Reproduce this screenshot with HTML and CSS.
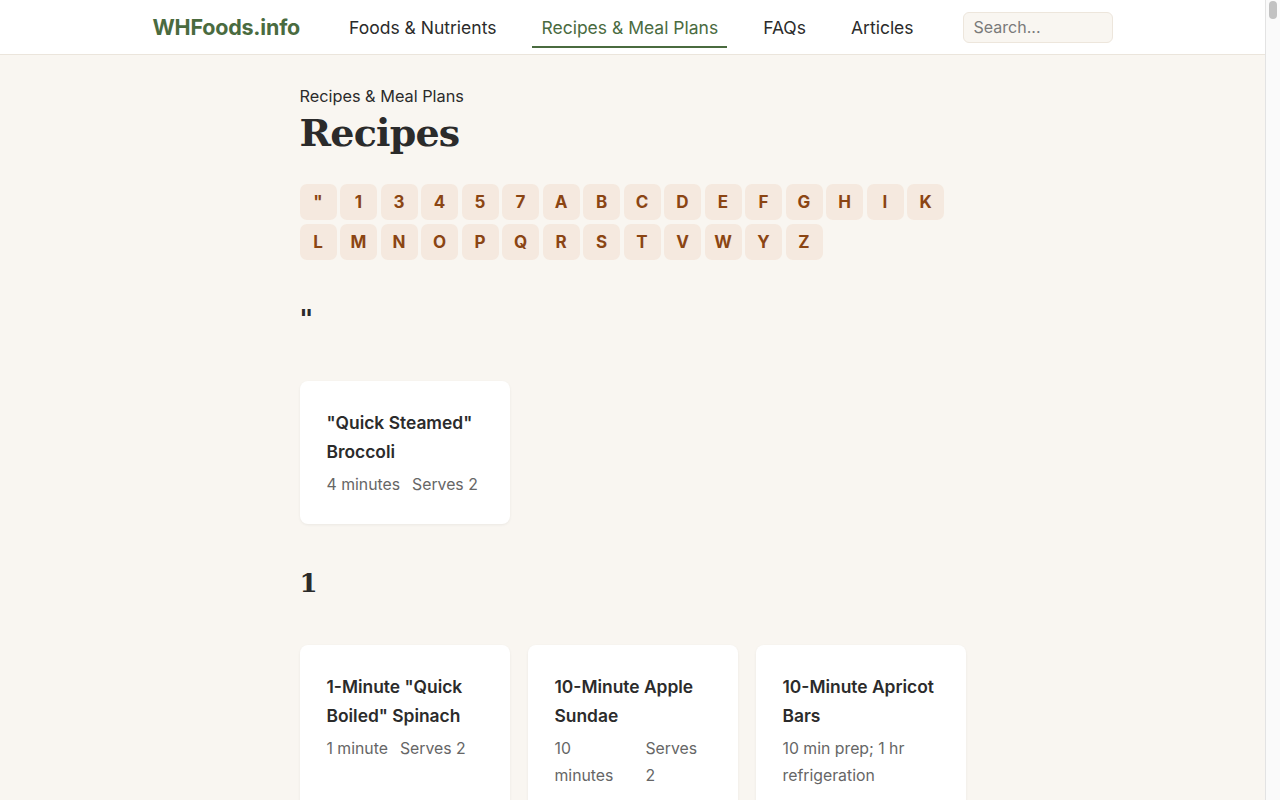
FILE: index.html
```html
<!DOCTYPE html>
<html lang="en">
<head>
<meta charset="utf-8">
<title>Recipes - WHFoods.info</title>
<link rel="stylesheet" href="styles.css">
</head>
<body>
<div class="page">
<header class="site-header">
  <div class="header-inner">
    <a class="logo" href="#">WHFoods.info</a>
    <nav class="main-nav">
      <a href="#">Foods &amp; Nutrients</a>
      <a href="#" class="active">Recipes &amp; Meal Plans</a>
      <a href="#">FAQs</a>
      <a href="#">Articles</a>
    </nav>
    <input class="search" type="text" placeholder="Search...">
  </div>
</header>
<main class="content">
  <div class="breadcrumb">Recipes &amp; Meal Plans</div>
  <h1 class="page-title">Recipes</h1>
  <div class="letters">
    <a href="#">"</a><a href="#">1</a><a href="#">3</a><a href="#">4</a><a href="#">5</a><a href="#">7</a><a href="#">A</a><a href="#">B</a><a href="#">C</a><a href="#">D</a><a href="#">E</a><a href="#">F</a><a href="#">G</a><a href="#">H</a><a href="#">I</a><a href="#">K</a><a href="#">L</a><a href="#">M</a><a href="#">N</a><a href="#">O</a><a href="#">P</a><a href="#">Q</a><a href="#">R</a><a href="#">S</a><a href="#">T</a><a href="#">V</a><a href="#">W</a><a href="#">Y</a><a href="#">Z</a>
  </div>

  <section class="group">
    <h2 class="group-title">"</h2>
    <div class="cards">
      <a class="card" href="#">
        <div class="card-title">"Quick Steamed" Broccoli</div>
        <div class="card-meta"><span>4 minutes</span><span>Serves 2</span></div>
      </a>
    </div>
  </section>

  <section class="group">
    <h2 class="group-title">1</h2>
    <div class="cards">
      <a class="card" href="#">
        <div class="card-title">1-Minute "Quick Boiled" Spinach</div>
        <div class="card-meta"><span>1 minute</span><span>Serves 2</span></div>
      </a>
      <a class="card" href="#">
        <div class="card-title">10-Minute Apple Sundae</div>
        <div class="card-meta"><span>10 minutes</span><span>Serves 2</span></div>
      </a>
      <a class="card" href="#">
        <div class="card-title">10-Minute Apricot Bars</div>
        <div class="card-meta"><span>10 min prep; 1 hr refrigeration</span></div>
      </a>
    </div>
  </section>
</main>
</div>
<div class="scrollbar" aria-hidden="true"><div class="scrollbar-thumb"></div></div>
</body>
</html>
```
FILE: styles.css
```css
* { box-sizing: border-box; }
html, body { margin: 0; padding: 0; }
body {
  background: #f9f6f1;
  color: #2b2b2b;
  font-family: Inter, "Noto Sans", "Liberation Sans", sans-serif;
  font-size: 16px;
  padding-right: 15px;
}
a { text-decoration: none; color: inherit; }

.scrollbar {
  position: fixed;
  top: 0;
  right: 0;
  width: 15px;
  height: 100vh;
  background: #fafafa;
  border-left: 1px solid #e3e3e3;
}
.scrollbar-thumb {
  margin: 1px 0 0 3px;
  width: 8px;
  height: 18px;
  border-radius: 4px;
  background: #c2c2c2;
}

.site-header {
  background: #ffffff;
  border-bottom: 1px solid #ebe5dc;
  height: 55px;
}
.header-inner {
  height: 54px;
  display: flex;
  align-items: center;
  justify-content: center;
  gap: 40px;
}
.logo {
  font-size: 21.5px;
  font-weight: 700;
  color: #4a6b3f;
  letter-spacing: -0.2px;
}
.main-nav {
  display: flex;
  gap: 27px;
  height: 54px;
}
.main-nav a {
  display: flex;
  align-items: center;
  padding: 8px 9px 0;
  font-size: 17.5px;
  color: #2b2b2b;
  border-bottom: 2px solid transparent;
  height: 48px;
}
.main-nav a.active {
  color: #4a6b3f;
  border-bottom-color: #4a6b3f;
}
.search {
  width: 150px;
  height: 31px;
  border: 1px solid #ede6dc;
  border-radius: 6px;
  background: #f9f6f1;
  font-family: inherit;
  font-size: 16px;
  padding: 0 10px;
  color: #333;
}
.search::placeholder { color: #7a7a7a; }

.content {
  width: 666px;
  margin: 0 auto;
  padding-top: 32px;
  padding-bottom: 40px;
}
.breadcrumb {
  font-size: 16.3px;
  color: #2b2b2b;
  line-height: 18px;
}
.page-title {
  font-family: "DejaVu Serif", "Liberation Serif", serif;
  font-size: 38px;
  font-weight: 700;
  margin: 3px 0 0;
  line-height: 50px;
  letter-spacing: -0.8px;
  color: #2b2b2b;
}
.letters {
  display: flex;
  flex-wrap: wrap;
  gap: 4px 3.5px;
  width: 650px;
  margin-top: 26px;
}
.letters a {
  width: 37px;
  height: 36px;
  display: flex;
  align-items: center;
  justify-content: center;
  background: #f5e9df;
  border-radius: 7px;
  color: #8b4513;
  font-weight: 700;
  font-size: 17px;
}
.group-title {
  font-family: "DejaVu Serif", "Liberation Serif", serif;
  font-size: 26px;
  font-weight: 700;
  line-height: 36px;
  margin: 41px 0 44px;
  color: #2b2b2b;
}
.cards {
  display: grid;
  grid-template-columns: repeat(3, 210px);
  gap: 18px;
}
.card {
  background: #ffffff;
  border-radius: 8px;
  padding: 27px 27px 26px;
  box-shadow: 0 1px 3px rgba(0, 0, 0, 0.06);
  display: block;
}
.card-title {
  font-size: 17.4px;
  font-weight: 600;
  line-height: 29px;
  color: #2b2b2b;
}
.card-meta {
  display: flex;
  gap: 12px;
  margin-top: 5px;
  font-size: 15.8px;
  line-height: 27px;
  color: #666;
}
```
